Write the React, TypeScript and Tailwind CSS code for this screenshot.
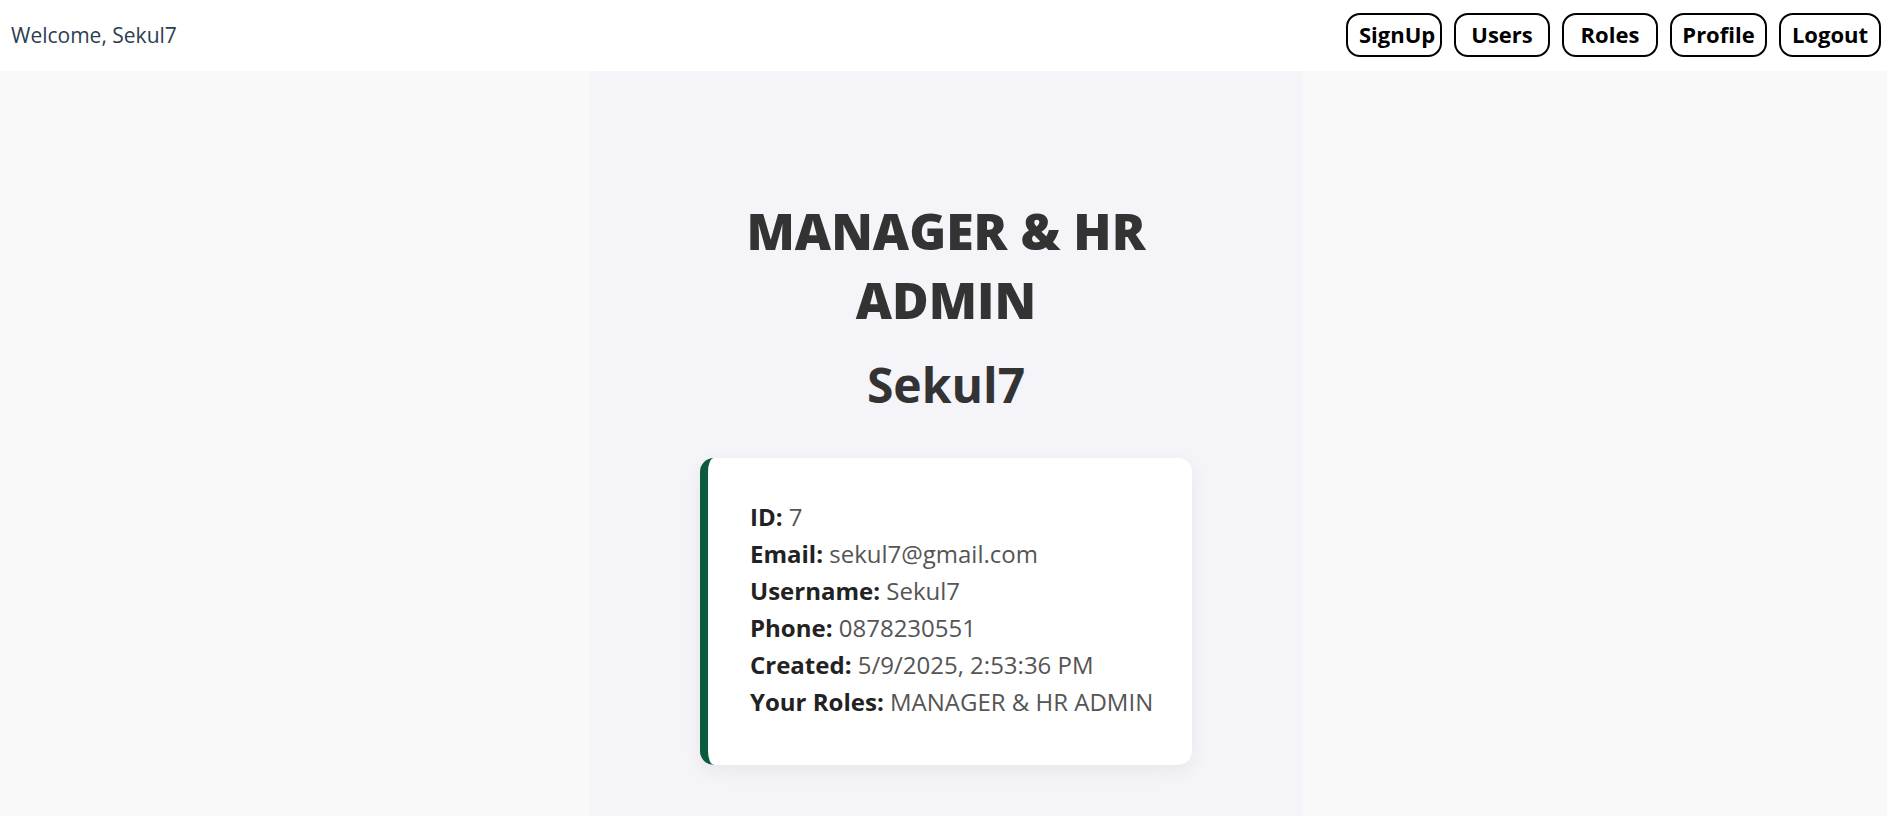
const navItems = [
  { label: "SignUp", box: "w-24 justify-start pl-[11px]" },
  { label: "Users", box: "w-24 justify-center" },
  { label: "Roles", box: "w-24 justify-center" },
  { label: "Profile", box: "w-[97px] justify-center" },
  { label: "Logout", box: "w-[102px] justify-center" },
];

const details = [
  { label: "ID", value: "7" },
  { label: "Email", value: "sekul7@gmail.com" },
  { label: "Username", value: "Sekul7" },
  { label: "Phone", value: "0878230551" },
  { label: "Created", value: "5/9/2025, 2:53:36 PM" },
  { label: "Your Roles", value: "MANAGER & HR ADMIN" },
];

function NavBar() {
  return (
    <header className="flex items-center justify-between bg-white pt-[13px] pr-[6px] pb-[14px] pl-[11px]">
      <span className="text-[21px] leading-7 text-[#2c3e50]">Welcome, Sekul7</span>
      <nav className="flex gap-3">
        {navItems.map(({ label, box }) => (
          <button
            key={label}
            type="button"
            className={`flex h-11 items-center rounded-[14px] border-2 border-black bg-white pb-[2px] text-[22px] leading-7 font-bold whitespace-nowrap text-black ${box}`}
          >
            {label}
          </button>
        ))}
      </nav>
    </header>
  );
}

function ProfileCard() {
  return (
    <section className="w-full rounded-[14px] border-l-8 border-[#0b5a3e] bg-white pt-10 pr-9 pb-[45px] pl-[42px] shadow-[0_6px_20px_rgba(0,0,0,0.06)]">
      {details.map(({ label, value }) => (
        <p key={label} className="text-[24px] leading-[37px] whitespace-nowrap text-[#555555]">
          <strong className="font-bold text-[#222222]">{label}:</strong> {value}
        </p>
      ))}
    </section>
  );
}

export default function App() {
  return (
    <div className="flex min-h-screen flex-col bg-[#f9f9f9] font-['Open_Sans','Noto_Sans',sans-serif]">
      <NavBar />
      <main className="flex flex-1 justify-center pl-[5px]">
        <div className="flex w-full max-w-[714px] flex-col items-center bg-[#f4f4f9] pt-[126px] pb-[51px]">
          <div className="flex w-full max-w-[492px] flex-col items-center">
            <h1 className="text-center text-[50px] leading-[69px] font-extrabold text-[#333333]">
              MANAGER &amp; HR ADMIN
            </h1>
            <h2 className="mt-[15px] mb-[39px] text-center text-[48px] leading-[69px] font-bold text-[#333333]">
              Sekul7
            </h2>
            <ProfileCard />
          </div>
        </div>
      </main>
    </div>
  );
}
